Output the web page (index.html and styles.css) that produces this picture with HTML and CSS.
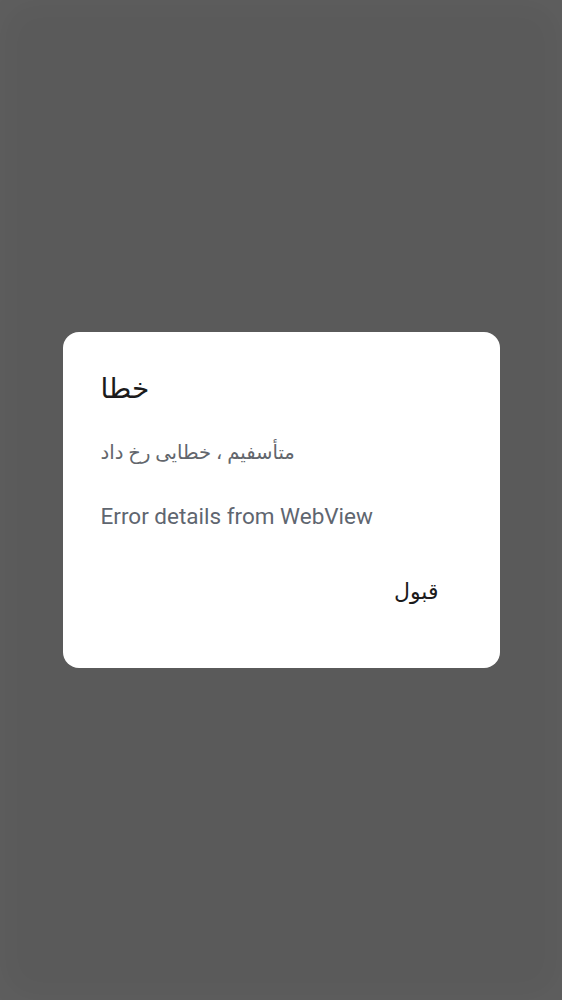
FILE: index.html
```html
<!DOCTYPE html>
<html lang="fa">
<head>
<meta charset="utf-8">
<title>خطا</title>
<link rel="stylesheet" href="styles.css">
</head>
<body>
<div class="scrim">
  <div class="dialog" role="alertdialog">
    <h1 class="title" dir="rtl">خطا</h1>
    <p class="message" dir="rtl">متأسفیم ، خطایی رخ داد</p>
    <p class="details">Error details from WebView</p>
    <div class="actions">
      <button class="btn" dir="rtl">قبول</button>
    </div>
  </div>
</div>
</body>
</html>
```
FILE: styles.css
```css
html, body {
  margin: 0;
  padding: 0;
  height: 100%;
}
body {
  background: #5a5a5a;
  font-family: Roboto, "DejaVu Sans", sans-serif;
}
.scrim {
  height: 1000px;
  display: flex;
  align-items: center;
  justify-content: center;
  box-shadow: inset 0 0 40px rgba(255, 255, 255, 0.04);
}
.dialog {
  width: 437px;
  height: 336px;
  box-sizing: border-box;
  background: #ffffff;
  border-radius: 16px;
  padding: 37px 38px 0 38px;
  display: flex;
  flex-direction: column;
  align-items: flex-start;
}
.title {
  margin: 0;
  font-size: 28px;
  font-weight: normal;
  color: #1b1b1b;
  line-height: 40px;
}
.message {
  margin: 30px 0 0 0;
  font-size: 19.6px;
  color: #62666c;
  line-height: 28px;
}
.details {
  margin: 35px 0 0 0;
  font-size: 22.5px;
  color: #5f6670;
  line-height: 28px;
}
.actions {
  align-self: stretch;
  display: flex;
  justify-content: flex-end;
  margin-top: 46px;
}
.btn {
  background: none;
  border: none;
  padding: 0 23px 0 0;
  font-family: inherit;
  font-size: 22px;
  color: #1b1b1b;
  line-height: 32px;
}
```
